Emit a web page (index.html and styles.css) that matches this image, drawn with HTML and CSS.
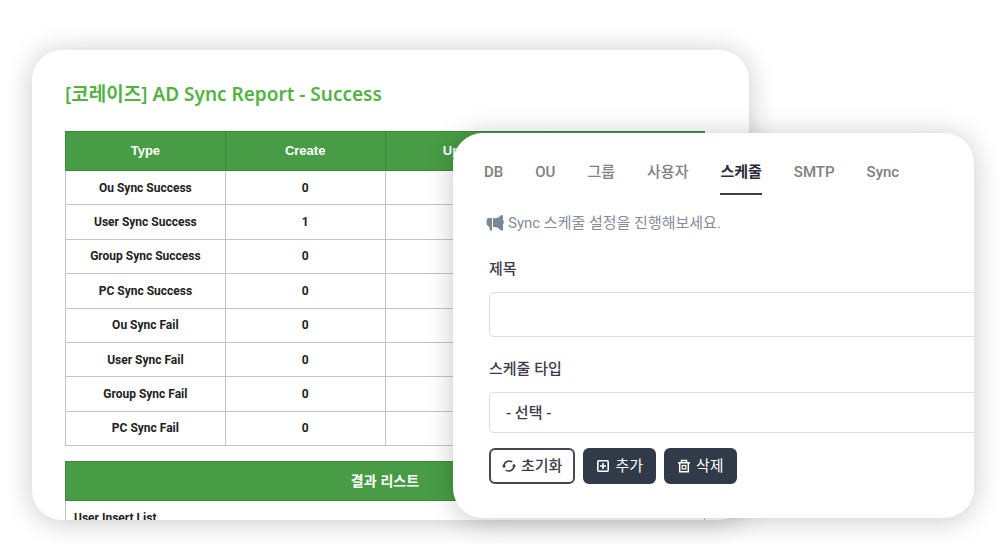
FILE: index.html
```html
<!DOCTYPE html>
<html lang="ko">
<head>
    <meta charset="UTF-8">
    <meta name="viewport" content="width=device-width, initial-scale=1.0">
    <title>AD Sync Report</title>
    <link rel="stylesheet" href="styles.css">
</head>
<body>
    <main class="stage">
        <section class="card report">
            <h1>[코레이즈] AD Sync Report - Success</h1>
            <table class="summary">
                <thead>
                    <tr><th>Type</th><th>Create</th><th>Update</th><th>Delete</th></tr>
                </thead>
                <tbody>
                    <tr><td>Ou Sync Success</td><td>0</td><td>0</td><td>0</td></tr>
                    <tr><td>User Sync Success</td><td>1</td><td>0</td><td>0</td></tr>
                    <tr><td>Group Sync Success</td><td>0</td><td>0</td><td>0</td></tr>
                    <tr><td>PC Sync Success</td><td>0</td><td>0</td><td>0</td></tr>
                    <tr><td>Ou Sync Fail</td><td>0</td><td>0</td><td>0</td></tr>
                    <tr><td>User Sync Fail</td><td>0</td><td>0</td><td>0</td></tr>
                    <tr><td>Group Sync Fail</td><td>0</td><td>0</td><td>0</td></tr>
                    <tr><td>PC Sync Fail</td><td>0</td><td>0</td><td>0</td></tr>
                </tbody>
            </table>
            <div class="result">
                <table class="result-list">
                    <thead>
                        <tr><th>결과 리스트</th></tr>
                    </thead>
                    <tbody>
                        <tr><td>User Insert List</td></tr>
                    </tbody>
                </table>
            </div>
        </section>

        <section class="card settings">
            <nav class="tabs">
                <a href="#db">DB</a>
                <a href="#ou">OU</a>
                <a href="#group">그룹</a>
                <a href="#user">사용자</a>
                <a href="#schedule" class="active">스케줄</a>
                <a href="#smtp">SMTP</a>
                <a href="#sync">Sync</a>
            </nav>
            <p class="hint">
                <svg width="18" height="18" viewBox="0 0 18 18" fill="currentColor" aria-hidden="true">
                    <path d="M2.500 4H6v12.500H3.800L3.300 12.500C1.500 12.500.5 11 .5 8.300S1 4 2.500 4z"/>
                    <path d="M7 4.300h2c2.300 0 4-1.300 6-3h2V6c1 .3 1 4 0 4.300V16.500h-2c-2-1.800-3.700-3.500-6-3.500H7z"/>
                </svg>
                Sync 스케줄 설정을 진행해보세요.
            </p>
            <form class="form">
                <label for="title">제목</label>
                <input type="text" id="title">
                <label for="type">스케줄 타입</label>
                <select id="type">
                    <option>- 선택 -</option>
                </select>
                <div class="buttons">
                    <button type="reset" class="btn btn-outline">
                        <svg width="14" height="14" viewBox="0 0 14 14" fill="none" stroke="currentColor" stroke-width="1.500" aria-hidden="true">
                            <path d="M2 9V7a5.200 5.200 0 0 1 8.300-4M12 5v2a5.200 5.200 0 0 1-8.300 4"/>
                            <path d="M-.2 7.500 2 5l2.200 2.500zM9.800 6.500 12 9l2.200-2.500z" fill="currentColor" stroke="none"/>
                        </svg>
                        초기화
                    </button>
                    <button type="button" class="btn">
                        <svg width="14" height="14" viewBox="0 0 14 14" fill="none" stroke="currentColor" stroke-width="1.600" aria-hidden="true">
                            <rect x="1.800" y="1.800" width="10.400" height="10.400" rx="1"/>
                            <path d="M7 4v6M4 7h6"/>
                        </svg>
                        추가
                    </button>
                    <button type="button" class="btn">
                        <svg width="14" height="14" viewBox="0 0 14 14" fill="none" stroke="currentColor" stroke-width="1.500" aria-hidden="true">
                            <path d="M1 3.800h12M4.500 3.500V1.500h5v2M2.700 4v8.700h8.600V4"/>
                            <rect x="5.200" y="6.500" width="3.600" height="3.500" stroke-width="1.200"/>
                        </svg>
                        삭제
                    </button>
                </div>
            </form>
        </section>
    </main>
</body>
</html>
```
FILE: styles.css
```css
* {
    box-sizing: border-box;
}
body {
    margin: 0;
    background-color: #fff;
    font-family: Roboto, "Noto Sans CJK KR", sans-serif;
    font-size: 15px;
    line-height: 22px;
}

/* the two cards share one grid, the settings card lies over the report */
.stage {
    display: grid;
    grid-template-columns: 421fr 296fr 225fr;
    grid-template-rows: 83px auto;
    align-items: start;
    padding: 50px 34px 24px 32px;
}
.card {
    background-color: #fff;
    border-radius: 30px;
    box-shadow: 0 2px 28px rgba(0, 0, 0, 0.22);
    overflow: hidden;
}
.report {
    grid-column: 1 / 3;
    grid-row: 1 / 3;
    padding: 30px 44px 0 33px;
}
.settings {
    grid-column: 2 / 4;
    grid-row: 2;
    padding: 28px 0 34px 31px;
}

/* report */
.report h1 {
    margin: 0 0 23px;
    color: #55b244;
    font-family: "Noto Sans", "Noto Sans CJK KR", sans-serif;
    font-size: 19px;
    font-weight: 600;
    line-height: 28px;
}
table {
    width: 100%;
    border-collapse: collapse;
    font-family: Roboto, "Noto Sans CJK KR", sans-serif;
    font-size: 12px;
    font-weight: bold;
    line-height: 16px;
    color: #222;
}
th {
    height: 39px;
    padding: 0;
    background-color: #489c45;
    border: 1px solid #3b8a3c;
    color: #fff;
    font-family: "Liberation Sans", "Noto Sans CJK KR", sans-serif;
    font-size: 13px;
}
td {
    padding: 0;
    border: 1px solid #c6c2c2;
    text-align: center;
}
.summary {
    table-layout: fixed;
    height: 315px;
    margin-bottom: 15px;
}
.result {
    max-height: 59px;
    overflow: hidden;
}
.result-list th {
    font-size: 14px;
}
.result-list td {
    padding: 9px 8px;
    text-align: left;
}

/* settings */
.tabs {
    display: flex;
    gap: 32px;
}
.tabs a {
    padding-bottom: 10px;
    border-bottom: 2px solid transparent;
    color: #808080;
    font-weight: 500;
    text-decoration: none;
}
.tabs .active {
    border-color: #403b4c;
    color: #2b2735;
    font-weight: bold;
}
.hint {
    display: flex;
    align-items: center;
    gap: 4px;
    margin: 17px 0 24px 2px;
    color: #868b9b;
}
.hint svg {
    color: #788896;
}
.form {
    display: flex;
    flex-direction: column;
    padding-left: 5px;
}
.form label {
    margin-bottom: 12px;
    color: #3f3a49;
    font-weight: 500;
}
/* fields run off the right side of the card */
.form input,
.form select {
    width: 100%;
    padding: 0 16px;
    background-color: #fff;
    border: 1px solid #dcdfe2;
    border-right: 0;
    border-radius: 5px 0 0 5px;
    color: #3f3a49;
    font: inherit;
    font-weight: 500;
    appearance: none;
}
.form input {
    height: 45px;
    margin-bottom: 21px;
}
.form select {
    height: 41px;
    margin-bottom: 15px;
}
.buttons {
    display: flex;
    gap: 8px;
}
.btn {
    display: flex;
    align-items: center;
    gap: 5px;
    height: 36px;
    padding: 0 11px;
    background-color: #313a48;
    border: 2px solid #313a48;
    border-radius: 6px;
    color: #fff;
    font: inherit;
}
.btn-outline {
    background-color: #fff;
    border-color: #4a4555;
    color: #3f3a49;
    font-weight: 500;
}
```
